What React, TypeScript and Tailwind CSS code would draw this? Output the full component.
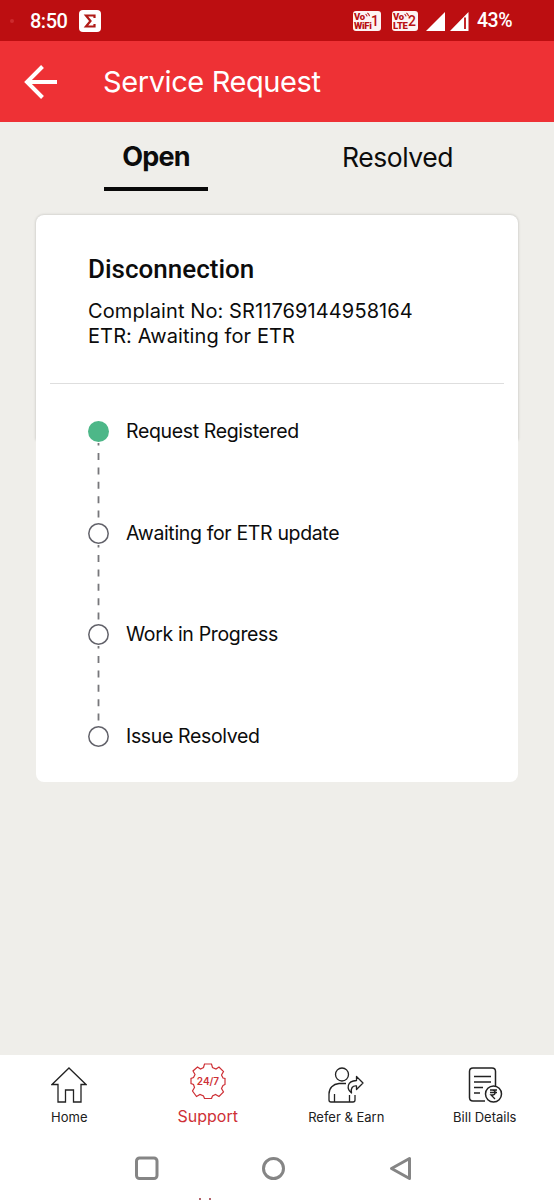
const STEPS = [
  { label: "Request Registered", done: true },
  { label: "Awaiting for ETR update", done: false },
  { label: "Work in Progress", done: false },
  { label: "Issue Resolved", done: false },
];

function VoBadge({ label, sim, className }: { label: string; sim: string; className: string }) {
  return (
    <div className={`flex h-5 items-center justify-between rounded-[3px] bg-[#fdf3f3] pr-[2px] pl-[1px] text-[#b90f12] ${className}`}>
      <div className="flex flex-col text-[9.5px] leading-[9px] font-black tracking-[-0.3px]">
        <span className="flex">
          Vo
          <svg width="6" height="6" viewBox="0 0 7 6" fill="none" stroke="currentColor" strokeWidth="1.2">
            <path d="M0.5 2.2q1.4 0 2 2.5M2.7 0.7q2 .6 2.6 3.7" />
          </svg>
        </span>
        <span>{label}</span>
      </div>
      <span className="-ml-1 text-[14px] leading-none font-medium">{sim}</span>
    </div>
  );
}

function StatusBar() {
  return (
    <div className="flex h-[41px] items-center bg-[#bc0e11] pl-[10px] font-[Roboto,sans-serif] text-white">
      <span className="mr-4 h-1 w-1 rounded-full bg-[#cc2a2d]" />
      <span className="w-[49px] pt-px text-[20px] font-medium tracking-[-0.5px]">8:50</span>
      <svg width="22" height="22" viewBox="0 0 22 22">
        <rect width="22" height="22" rx="4" fill="#fff" />
        <path d="M15.5 8V5.5H7l4.500 5.500L7 16.500h8.500V14" fill="none" stroke="#b01a16" strokeWidth="2.2" />
      </svg>
      <VoBadge label="WiFi" sim="1" className="ml-[252px] w-7" />
      <VoBadge label="LTE" sim="2" className="ml-[11px] w-[26px]" />
      <svg className="ml-2" width="43" height="20" viewBox="0 0 43 20" fill="#fff">
        <path d="M0 20 19 1v19zM24 20 42.5 1v19z" />
        <path d="M39 6.5V18" stroke="#bc0e11" strokeWidth="1.8" />
      </svg>
      <span className="ml-2 pt-px text-[19.5px] font-medium tracking-[-0.5px]">43%</span>
    </div>
  );
}

function Header() {
  return (
    <header className="flex h-[81px] items-center bg-[#ee3135] pl-6 text-white">
      <svg width="34" height="34" viewBox="0 0 34 34" fill="none" stroke="#fff" strokeWidth="4">
        <path d="M18.5 1.5 3 17l15.500 15.500M3 17h30" />
      </svg>
      <h1 className="ml-[45px] text-[29px] leading-none font-normal tracking-[-0.4px]">Service Request</h1>
    </header>
  );
}

function Tabs() {
  return (
    <div className="grid h-[93px] grid-cols-[312px_171px] items-start text-[26.5px]">
      <div className="flex justify-center">
        <div className="flex h-[69px] w-[104px] flex-col items-center justify-between border-b-4 border-[#090909] pt-[17px]">
          <span className="text-[27px] leading-9 font-bold tracking-[-0.8px]">Open</span>
        </div>
      </div>
      <div className="flex justify-center pt-[17px]">
        <span className="leading-9 tracking-[-0.45px]">Resolved</span>
      </div>
    </div>
  );
}

function Step({ label, done, last }: { label: string; done: boolean; last: boolean }) {
  return (
    <li className="flex h-[101.5px] items-start gap-[17px]">
      <svg width="21" height="101" viewBox="0 0 21 101" fill="none">
        <circle
          cx="10.5"
          cy="10.5"
          r={done ? 10.5 : 9.7}
          fill={done ? "#4db788" : "#fff"}
          stroke={done ? "none" : "#62626a"}
          strokeWidth="1.5"
        />
        {!last && (
          <path d="M10.500 22v76" stroke="#77777b" strokeWidth="1.8" strokeDasharray="7 7.4" strokeDashoffset="4.4" />
        )}
      </svg>
      <span className="text-[19.5px] leading-[21px] tracking-[-0.35px]">{label}</span>
    </li>
  );
}

function RequestCard() {
  return (
    <section className="mx-9">
      {/* only the upper part of the card casts a shadow */}
      <div className="h-[225px] rounded-t-[8px] bg-white shadow-[0_0_3px_rgba(0,0,0,0.22)]">
        <div className="mx-[14px] h-[169px] border-b border-[#dedede] pt-[37px] pl-[38px]">
          <h2 className="font-[Roboto,sans-serif] text-[26px] leading-[34px] font-medium">Disconnection</h2>
          <p className="mt-[13px] text-[20px] leading-[25px] tracking-[0.1px]">
            Complaint No: SR11769144958164
            <br />
            ETR: Awaiting for ETR
          </p>
        </div>
      </div>
      <div className="relative h-[342px] rounded-b-[8px] bg-white pl-[52px]">
        <ul className="relative -top-[19px]">
          {STEPS.map((step, i) => (
            <Step key={step.label} {...step} last={i === STEPS.length - 1} />
          ))}
        </ul>
      </div>
    </section>
  );
}

function HomeIcon() {
  return (
    <svg width="36" height="36" viewBox="0 0 36 36" fill="none" stroke="#222" strokeWidth="1.3">
      <path d="M18 1 35 17.500h-5V35h-7.500V23h-8v12H7V17.500H1z" />
    </svg>
  );
}

function SupportIcon() {
  return (
    <svg width="36" height="36" viewBox="0 0 36 36" fill="none" stroke="#ce3036" strokeWidth="1.2">
      <path d="M14.5 1h7l1 3.500 3.500 1.500 3-2 4.500 4.500-2 3.500 1.500 3 2 .5v6l-2 1-1.500 3 2 3.500-4.500 4.500-3.500-2-3 1.500-1 2.500h-7l-1-2.500-3.500-1.500-3.500 2L2.500 28l2-3.500L3.500 21.500 1 20.500v-5l2.500-1 1.500-3L3 8l4.500-4 3 2 3-1.500z" />
      <text x="18" y="21.5" textAnchor="middle" fontSize="10" fontWeight="600" fill="#ce3036" stroke="none">
        24/7
      </text>
    </svg>
  );
}

function ReferIcon() {
  return (
    <svg width="36" height="36" viewBox="0 0 36 36" fill="none" stroke="#222" strokeWidth="1.3">
      <circle cx="14" cy="7.5" r="6.5" />
      <path d="M18 16.500h-7C5 17 1 21 1 27v6q0 2 2 2h22q2 0 2-2v-5M6.500 35v-8M21.500 35v-7" />
      <path d="M28.5 9.500 35 16l-6.500 6.500V19c-4-.3-6 2-5 7-5-4-5-12 5-12.500z" strokeLinejoin="round" />
    </svg>
  );
}

function BillIcon() {
  return (
    <svg width="36" height="36" viewBox="0 0 36 36" fill="none" stroke="#222" strokeWidth="1.5">
      <path d="M18 34H6q-3.500 0-3.500-3.500v-26Q2.500 1 6 1h19q3.500 0 3.500 3.500V20M7 9.500h17M7 15h17M7 20.500h9M7 26h6" />
      <circle cx="26.5" cy="27" r="8" fill="#fff" />
      <path d="M23 23h7M23 25.500h7M23 23h2.500c3.500 0 3.500 5 0 5H24l4 4" strokeWidth="1.3" />
    </svg>
  );
}

function BottomNav() {
  return (
    <nav className="grid h-[83px] grid-cols-4 pt-2 text-[13px] text-[#202020]">
      <div className="flex flex-col items-center gap-px pt-1">
        <HomeIcon />
        <span className="leading-[26px]">Home</span>
      </div>
      <div className="flex flex-col items-center gap-[5px] text-[#ce3036]">
        <SupportIcon />
        <span className="text-[16px] leading-6">Support</span>
      </div>
      <div className="flex flex-col items-center gap-px pt-1">
        <ReferIcon />
        <span className="leading-[26px]">Refer &amp; Earn</span>
      </div>
      <div className="flex flex-col items-center gap-px pt-1">
        <BillIcon />
        <span className="leading-[26px]">Bill Details</span>
      </div>
    </nav>
  );
}

function SystemNav() {
  return (
    <div className="flex h-[62px] flex-col justify-between pt-[18px]">
      <svg className="ml-[134px]" width="280" height="25" viewBox="0 0 280 25" fill="none" stroke="#858585" strokeWidth="3">
        <rect x="2.5" y="2" width="20.5" height="20.5" rx="3" />
        <circle cx="139.500" cy="12.500" r="10" />
        <path d="M275.500 2.500v20L257.500 12.500z" strokeLinejoin="round" />
      </svg>
      <div className="ml-[199px] flex gap-2">
        <span className="h-[2px] w-[2px] bg-[#b2666c]" />
        <span className="h-[2px] w-[2px] bg-[#b2666c]" />
      </div>
    </div>
  );
}

export default function App() {
  return (
    <div className="flex h-[1200px] w-[554px] flex-col overflow-hidden bg-[#efeeea] font-[Inter,sans-serif] text-[#0c0c0c]">
      <StatusBar />
      <Header />
      <Tabs />
      <RequestCard />
      <div className="mt-auto bg-white">
        <BottomNav />
        <SystemNav />
      </div>
    </div>
  );
}
